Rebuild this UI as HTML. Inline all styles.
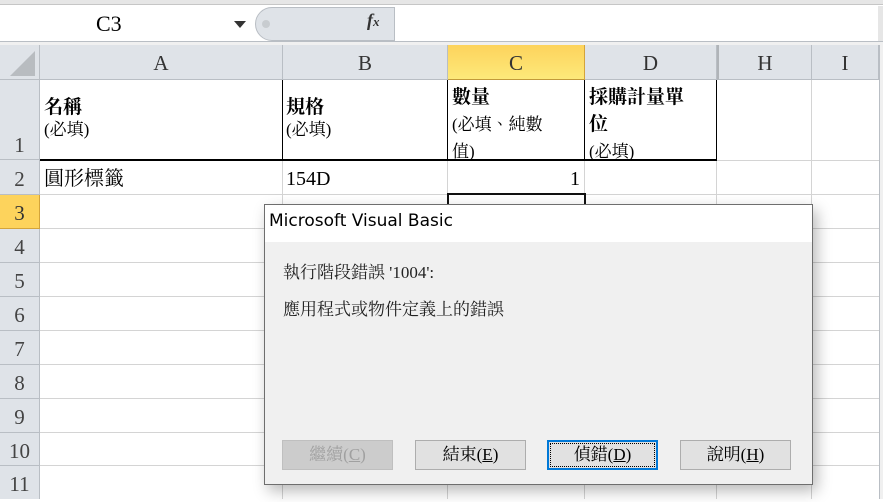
<!DOCTYPE html>
<html><head><meta charset="utf-8"><style>
*{margin:0;padding:0;box-sizing:border-box}
body{width:883px;height:499px;position:relative;overflow:hidden;background:#fff;font-family:"Liberation Serif","Noto Serif CJK SC",serif;color:#000}
.a{position:absolute}
.hd{background:#dfe3e8;color:#333;font-size:21px;text-align:center;border-right:1px solid #b9bec4;border-bottom:1px solid #b9bec4}
.rh{background:#dfe3e8;color:#444;font-size:21px;text-align:center;border-bottom:1px solid #b9bec4;border-right:1px solid #b9bec4}
.hl{position:absolute;height:1px;background:#d4d4d4}
.vl{position:absolute;width:1px;background:#d4d4d4}
.c{font-family:"Liberation Serif","Noto Serif CJK TC",serif;font-size:17px;line-height:22px}
.b{font-weight:bold;font-size:19px}
.btn{position:absolute;top:440px;height:30px;border:1px solid #adadad;background:#e1e1e1;font-family:"Liberation Serif","Noto Serif CJK TC",serif;font-size:17px;text-align:center;line-height:28px;color:#000}
.ds{font-family:"Liberation Serif","Noto Serif CJK TC",serif;font-size:17px;color:#222}
</style></head><body>
<div class="a" style="left:0;top:0;width:883px;height:5px;background:#e6e6e6;border-bottom:1px solid #c6c6c6"></div>
<div class="a" style="left:0;top:6px;width:878px;height:35px;background:#fff"></div>
<div class="a" style="left:96px;top:11px;font-size:22px;font-family:'Liberation Serif',serif">C3</div>
<div class="a" style="left:234px;top:21px;width:0;height:0;border-left:6px solid transparent;border-right:6px solid transparent;border-top:7px solid #333"></div>
<div class="a" style="left:255px;top:7px;width:140px;height:34px;background:#dfe3e8;border:1px solid #b9bec4;border-radius:17px 0 0 17px"></div>
<div class="a" style="left:262px;top:20px;width:8px;height:8px;border-radius:50%;background:#c8ccd0"></div>
<div class="a" style="left:367px;top:10px;font-style:italic;font-weight:bold;font-size:18px;color:#333">f<span style="font-size:13px">x</span></div>
<div class="a" style="left:878px;top:6px;width:5px;height:35px;background:#e6e6e6"></div>
<div class="a" style="left:0;top:41px;width:883px;height:4px;background:#f0f0f0;border-top:1px solid #b9bec4"></div>

<!-- column headers -->
<div class="a hd" style="left:0;top:45px;width:40px;height:35px"></div>
<div class="a" style="left:10px;top:51px;width:0;height:0;border-left:25px solid transparent;border-bottom:25px solid #b8bcc0"></div>
<div class="a hd" style="left:40px;top:45px;width:243px;height:35px;line-height:36px">A</div>
<div class="a hd" style="left:283px;top:45px;width:165px;height:35px;line-height:36px">B</div>
<div class="a hd" style="left:448px;top:45px;width:137px;height:35px;line-height:36px;background:linear-gradient(#fdd35c,#fde97a);border-color:#d4a43a;border-bottom:1px solid #c29a3a">C</div>
<div class="a hd" style="left:585px;top:45px;width:132px;height:35px;line-height:36px">D</div>
<div class="a hd" style="left:717px;top:45px;width:95px;height:35px;line-height:36px;border-left:2px solid #b0b4b8">H</div>
<div class="a hd" style="left:812px;top:45px;width:67px;height:35px;line-height:36px">I</div>
<div class="a" style="left:879px;top:45px;width:4px;height:454px;background:#f0f0f0;border-left:1px solid #b9bec4"></div>

<!-- row headers -->
<div class="a rh" style="left:0;top:80px;width:40px;height:80px;line-height:130px">1</div>
<div class="a rh" style="left:0;top:160px;width:40px;height:35px;line-height:38px">2</div>
<div class="a rh" style="left:0;top:195px;width:40px;height:34px;line-height:36px;background:#fdd35c;border-color:#d4a43a;color:#333">3</div>
<div class="a rh" style="left:0;top:229px;width:40px;height:34px;line-height:36px">4</div>
<div class="a rh" style="left:0;top:263px;width:40px;height:34px;line-height:36px">5</div>
<div class="a rh" style="left:0;top:297px;width:40px;height:34px;line-height:36px">6</div>
<div class="a rh" style="left:0;top:331px;width:40px;height:34px;line-height:36px">7</div>
<div class="a rh" style="left:0;top:365px;width:40px;height:34px;line-height:36px">8</div>
<div class="a rh" style="left:0;top:399px;width:40px;height:34px;line-height:36px">9</div>
<div class="a rh" style="left:0;top:433px;width:40px;height:33px;line-height:36px">10</div>
<div class="a rh" style="left:0;top:466px;width:40px;height:33px;line-height:36px;border-bottom:none">11</div>

<!-- grid lines -->
<div class="hl" style="left:40px;top:194px;width:839px"></div>
<div class="hl" style="left:40px;top:228px;width:839px"></div>
<div class="hl" style="left:40px;top:262px;width:839px"></div>
<div class="hl" style="left:40px;top:296px;width:839px"></div>
<div class="hl" style="left:40px;top:330px;width:839px"></div>
<div class="hl" style="left:40px;top:364px;width:839px"></div>
<div class="hl" style="left:40px;top:398px;width:839px"></div>
<div class="hl" style="left:40px;top:432px;width:839px"></div>
<div class="hl" style="left:40px;top:465px;width:839px"></div>
<div class="hl" style="left:717px;top:160px;width:162px"></div>
<div class="vl" style="left:282px;top:160px;height:339px"></div>
<div class="vl" style="left:447px;top:160px;height:339px"></div>
<div class="vl" style="left:584px;top:160px;height:339px"></div>
<div class="vl" style="left:716px;top:80px;height:419px"></div>
<div class="vl" style="left:811px;top:80px;height:419px"></div>
<!-- row1 bordered -->
<div class="a" style="left:40px;top:80px;width:677px;height:81px;border-bottom:2px solid #000;border-right:1px solid #000"></div>
<div class="a" style="left:282px;top:80px;width:1px;height:80px;background:#000"></div>
<div class="a" style="left:447px;top:80px;width:1px;height:80px;background:#000"></div>
<div class="a" style="left:584px;top:80px;width:1px;height:80px;background:#000"></div>

<div class="a c" style="left:44px;top:97px"><span class="b">名稱</span><br>(必填)</div>
<div class="a c" style="left:286px;top:97px"><span class="b">規格</span><br>(必填)</div>
<div class="a c" style="left:452px;top:84px;width:132px;line-height:27px"><span class="b">數量</span><br><span style="font-size:17px">(必填、純數<br>值)</span></div>
<div class="a c" style="left:589px;top:84px;width:128px;line-height:27px"><span class="b">採購計量單<br>位</span><br>(必填)</div>
<div class="a c" style="left:44px;top:168px;font-size:20px">圓形標籤</div>
<div class="a c" style="left:286px;top:168px;font-size:20px">154D</div>
<div class="a c" style="left:570px;top:168px;font-size:20px">1</div>
<div class="a" style="left:447px;top:193px;width:139px;height:20px;border:2px solid #111;border-bottom:none"></div>

<!-- dialog -->
<div class="a" style="left:264px;top:204px;width:549px;height:281px;background:#f0f0f0;border:1px solid #6e6e6e;box-shadow:4px 6px 14px rgba(0,0,0,.28)">
<div style="height:37px;background:#fff;font-family:'DejaVu Sans','Liberation Sans',sans-serif;font-size:17px;padding:6px 0 0 4px;color:#000">Microsoft Visual Basic</div>
</div>
<div class="a ds" style="left:283px;top:258px">執行階段錯誤 '1004':</div>
<div class="a ds" style="left:283px;top:295px">應用程式或物件定義上的錯誤</div>
<div class="btn" style="left:282px;width:111px;background:#cccccc;border-color:#bfbfbf;color:#a0a0a0">繼續(<u>C</u>)</div>
<div class="btn" style="left:415px;width:111px">結束(<u>E</u>)</div>
<div class="btn" style="left:547px;width:111px;border:2px solid #0078d7;line-height:26px"><div style="position:absolute;inset:1px;border:1px dotted #000"></div>偵錯(<u>D</u>)</div>
<div class="btn" style="left:680px;width:111px">說明(<u>H</u>)</div>
</body></html>
